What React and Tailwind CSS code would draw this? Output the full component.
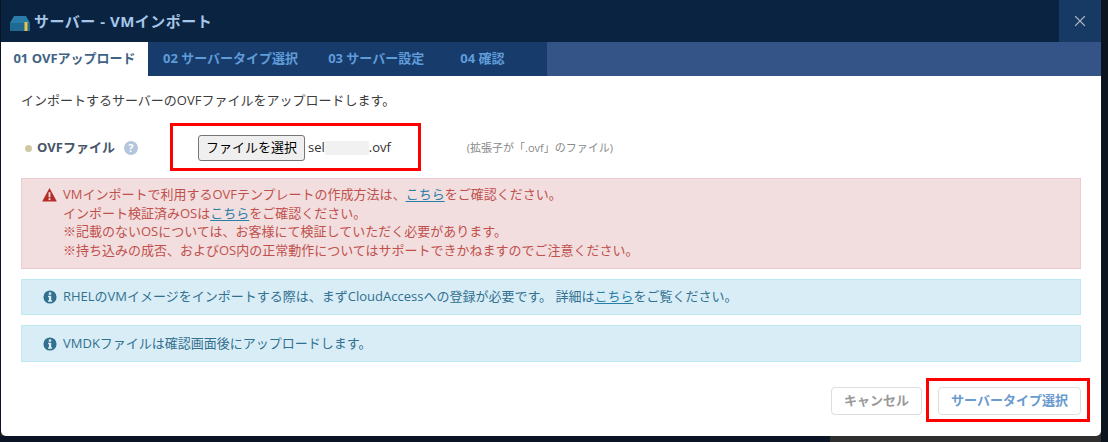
import { X } from "lucide-react";

const font = { fontFamily: '"Open Sans", "Noto Sans CJK JP", sans-serif' };

function Link({ children }) {
  return <a className="text-[#2a7fa8] underline underline-offset-2">{children}</a>;
}

function InfoIcon() {
  return (
    <svg viewBox="0 0 16 16" className="w-[14px] h-[14px] shrink-0">
      <circle cx="8" cy="8" r="7.5" fill="#31708f" />
      <rect x="6.6" y="2.8" width="2.8" height="2.6" fill="#d9edf7" />
      <path d="M5.8 6.6h3.6v5.2h1v1.6H5.8v-1.6h1V8.2h-1z" fill="#d9edf7" />
    </svg>
  );
}

function InfoBox({ className, children }) {
  return (
    <div className={`flex items-center gap-[6px] pl-[21px] bg-[#d9edf7] border border-[#bce8f1] text-[#31708f] text-[13px] ${className}`}>
      <InfoIcon />
      <p>{children}</p>
    </div>
  );
}

export default function App() {
  return (
    <div className="relative w-[1108px] h-[442px] bg-[#2f2f2f] overflow-hidden" style={font}>
      <div className="absolute left-0 top-0 w-[1px] h-[442px] bg-[#0a1424]" />
      <div className="absolute left-0 bottom-0 w-[830px] h-[6px] bg-[#0a1424]" />
      <div className="absolute right-0 top-0 w-[7px] h-[442px] bg-[#0c1420]" />

      {/* modal */}
      <div className="relative ml-[1px] w-[1100px] h-[436px] bg-white rounded-br-[5px] rounded-bl-[5px] overflow-hidden flex flex-col">
        <div className="h-[42px] bg-[#0a2340] flex items-center justify-between shrink-0">
          <div className="flex items-center gap-[4px] pl-[9px]">
            <svg viewBox="0 0 20 16" className="w-[20px] h-[16px] mt-[4px]">
              <path d="M4 1h12l4 7H0z" fill="#2a7ca8" />
              <rect x="0" y="8" width="20" height="8" fill="#1f6a92" />
              <rect x="14.5" y="7" width="3" height="9" fill="#eec14a" />
            </svg>
            <h1 className="text-[#a5c6e8] text-[15px] font-bold tracking-[0.5px]">サーバー - VMインポート</h1>
          </div>
          <div className="w-[42px] h-[42px] bg-[#163a64] flex items-center justify-center">
            <X size={18} strokeWidth={1.6} className="text-[#a7b0b8]" />
          </div>
        </div>

        <div className="h-[34px] bg-[#345488] flex shrink-0 text-[13px] font-bold">
          <div className="w-[147px] bg-white text-[#3f6384] flex items-center justify-center">01 OVFアップロード</div>
          <div className="flex-1 max-w-[399px] bg-[#173c6b] text-[#5f9bd9] flex items-center pl-[15px] gap-[30px]">
            <span>02 サーバータイプ選択</span>
            <span>03 サーバー設定</span>
            <span className="ml-[6px]">04 確認</span>
          </div>
        </div>

        <div className="px-[20px] flex-1 flex flex-col">
          <p className="mt-[14px] text-[13px] leading-[20px] text-[#3d3d3d]">インポートするサーバーのOVFファイルをアップロードします。</p>

          <div className="mt-[21px] flex items-center h-[34px]">
            <span className="w-[7px] h-[7px] rounded-full bg-[#cfc8a2] ml-[4px]" />
            <span className="ml-[5px] text-[13px] font-bold text-[#48566a]">OVFファイル</span>
            <span className="ml-[9px] w-[14px] h-[14px] rounded-full bg-[#b3c6dc] text-white text-[11px] font-bold flex items-center justify-center">?</span>
            <button className="ml-[60px] w-[107px] h-[26px] bg-[#efefef] border border-[#767676] rounded-[3px] text-[13px] text-black">ファイルを選択</button>
            <span className="ml-[3px] text-[13px] text-[#333] flex items-center">
              sel
              <span className="w-[44px] h-[14px] bg-[#f1f1f1]" />
              .ovf
            </span>
            <span className="ml-[76px] text-[11px] text-[#8a8a8a]">(拡張子が「.ovf」のファイル)</span>
          </div>

          <div className="mt-[13px] w-[1060px] h-[91px] bg-[#f2dede] border border-[#ebccd1] text-[#c0504d] text-[13px] leading-[18.5px] flex pl-[20px] pt-[6px] gap-[6px]">
            <svg viewBox="0 0 16 16" className="w-[15px] h-[15px] shrink-0 mt-[2px]">
              <path d="M8 1L15.8 15.4H.2z" fill="#b52b27" />
              <rect x="7" y="5.6" width="2" height="5.4" fill="#f2dede" />
              <rect x="7" y="12" width="2" height="2" fill="#f2dede" />
            </svg>
            <div>
              <p>VMインポートで利用するOVFテンプレートの作成方法は、<Link>こちら</Link>をご確認ください。</p>
              <p>インポート検証済みOSは<Link>こちら</Link>をご確認ください。</p>
              <p>※記載のないOSについては、お客様にて検証していただく必要があります。</p>
              <p>※持ち込みの成否、およびOS内の正常動作についてはサポートできかねますのでご注意ください。</p>
            </div>
          </div>

          <InfoBox className="mt-[10px] w-[1060px] h-[36px]">
            RHELのVMイメージをインポートする際は、まずCloudAccessへの登録が必要です。 詳細は<Link>こちら</Link>をご覧ください。
          </InfoBox>
          <InfoBox className="mt-[10px] w-[1060px] h-[37px]">VMDKファイルは確認画面後にアップロードします。</InfoBox>

          <div className="mt-[25px] w-[1060px] flex justify-end gap-[16px] text-[13px] font-bold">
            <button className="w-[91px] h-[28px] bg-white border border-[#dddddd] rounded-[4px] text-[#999999]">キャンセル</button>
            <button className="w-[143px] h-[28px] bg-white border border-[#dddddd] rounded-[4px] text-[#6a9bd0]">サーバータイプ選択</button>
          </div>
        </div>
      </div>

      {/* red annotation boxes drawn over the screenshot */}
      <div className="absolute left-[170px] top-[123px] w-[251px] h-[48px] border-[3px] border-[#ff0000]" />
      <div className="absolute left-[926px] top-[378px] w-[164px] h-[44px] border-[3px] border-[#ff0000]" />
    </div>
  );
}
